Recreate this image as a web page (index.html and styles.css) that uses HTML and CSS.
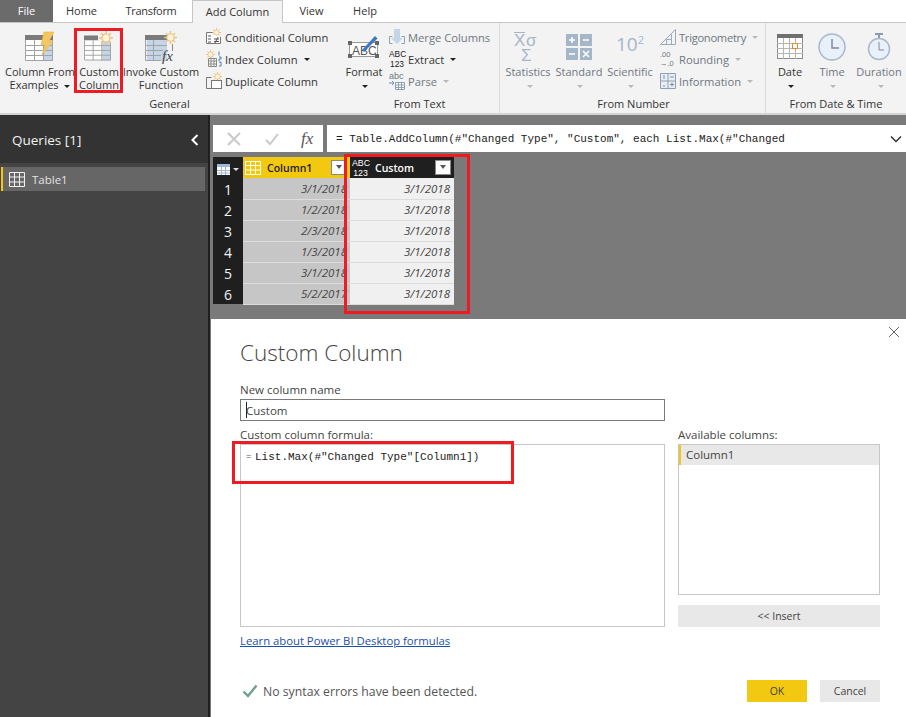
FILE: index.html
```html
<!doctype html>
<html lang="en">
<head>
    <meta charset="UTF-8">
    <title>Custom Column</title>
    <link rel="stylesheet" href="styles.css">
</head>
<body>

<svg class="sprite" width="0" height="0">
    <symbol id="sun" viewBox="0 0 14 14">
        <g stroke="#eec07c" stroke-width="1.4">
            <path d="M7 0v14M0 7h14M2 2l10 10M12 2L2 12"/>
        </g>
        <circle cx="7" cy="7" r="4" fill="#fdf3df" stroke="#eec07c" stroke-width="1.2"/>
    </symbol>
    <symbol id="table" viewBox="0 0 28 26">
        <rect x="0" y="0" width="28" height="26" fill="#fff"/>
        <rect x="19" y="5" width="9" height="21" fill="#c4d5e8"/>
        <rect x="0" y="0" width="28" height="5" fill="#7b7b7b"/>
        <path d="M.5 5v20.5h27V5M0 10.500h28M0 15.500h28M0 20.500h28M9.500 5v21M18.500 5v21" fill="none" stroke="#a2a2a2"/>
    </symbol>
</svg>

<div class="app">
    <ul class="tabs">
        <li class="tab file">File</li>
        <li class="tab home">Home</li>
        <li class="tab transform tight">Transform</li>
        <li class="tab active">Add Column</li>
        <li class="tab view">View</li>
        <li class="tab help">Help</li>
    </ul>

    <div class="ribbon">
        <section class="group group-general">
            <div class="group-items">
                <div class="big-btn w-74">
                    <svg class="big-icon" width="30" height="30" viewBox="0 0 30 30">
                        <use href="#table" x="0" y="3" width="28" height="26"/>
                        <path d="M19 0h10l-5 9h4L17 23l3-10h-4z" fill="#f3c65f" stroke="#e9b546" stroke-width=".6"/>
                    </svg>
                    <span class="big-label">Column From<br>Examples <i class="caret"></i></span>
                </div>
                <div class="big-btn w-44">
                    <svg class="big-icon" width="30" height="30" viewBox="0 0 30 30">
                        <use href="#table" x="0" y="3" width="27" height="26"/>
                        <rect x="14" y="0" width="14" height="10" fill="#f3f3f3"/>
                        <use href="#sun" x="15" y="-1" width="14" height="14"/>
                    </svg>
                    <span class="big-label">Custom<br>Column</span>
                </div>
                <div class="big-btn w-80">
                    <svg class="big-icon" width="32" height="30" viewBox="0 0 32 30">
                        <rect x="2" y="3" width="20" height="26" fill="#c4d5e8"/>
                        <rect x="0" y="3" width="27" height="5" fill="#7b7b7b"/>
                        <path d="M.5 8v20.500H16M.5 8v20M8.500 8v21M0 13.500h22M0 18.500h18M0 23.500h16" fill="none" stroke="#a2a2a2"/>
                        <use href="#sun" x="19" y="-1" width="13" height="13"/>
                        <text class="fx-mini" x="17" y="29">fx</text>
                        <path d="M27.500 12v7" stroke="#888"/>
                    </svg>
                    <span class="big-label">Invoke Custom<br>Function</span>
                </div>
                <div class="small-col small-general">
                    <div class="small-btn">
                        <svg width="16" height="18" viewBox="0 0 16 18">
                            <use href="#sun" x="6" y="0" width="9" height="9"/>
                            <path d="M.5 4.500h6M.5 4.500v11h14V9" fill="#fff" stroke="#777"/>
                            <path d="M2 8h3M2 11h3M2 14h3M8 11h5M8 13.500h5M9 15l3-6" fill="none" stroke="#555"/>
                        </svg>
                        <span>Conditional Column</span>
                    </div>
                    <div class="small-btn">
                        <svg width="16" height="18" viewBox="0 0 16 18">
                            <use href="#sun" x="0" y="0" width="9" height="9"/>
                            <path d="M2.500 8.500h8v8h-8zM2.500 11h8M2.500 14h8M5 8.500v8M8 8.500v8" fill="#fff" stroke="#888"/>
                            <path d="M13 1.500v4M13 7h2v2h-2v2M13 12h2v4h-2" fill="none" stroke="#4a7fc0"/>
                        </svg>
                        <span>Index Column</span><i class="caret"></i>
                    </div>
                    <div class="small-btn">
                        <svg width="16" height="18" viewBox="0 0 16 18">
                            <use href="#sun" x="7" y="0" width="9" height="9"/>
                            <path d="M5.500 5.500H.5v11h5" fill="none" stroke="#777"/>
                            <rect x="5.500" y="8.500" width="10" height="8" fill="#fff" stroke="#777"/>
                        </svg>
                        <span>Duplicate Column</span>
                    </div>
                </div>
            </div>
            <div class="group-title">General</div>
        </section>

        <section class="group group-text">
            <div class="group-items">
                <div class="big-btn w-48">
                    <svg class="big-icon" width="32" height="30" viewBox="0 0 32 30">
                        <rect x="1.500" y="10.500" width="28" height="14" fill="#fff" stroke="#999"/>
                        <path d="M0 9h4v4H0zM27 9h4v4h-4zM0 22h4v4H0zM27 22h4v4h-4z" fill="#666"/>
                        <text class="abc-mini" x="4" y="23">ABC</text>
                        <path d="M14 18L27 4l2.500 2.500L16 20z" fill="#3f78bd"/>
                    </svg>
                    <span class="big-label">Format<br><i class="caret"></i></span>
                </div>
                <div class="small-col small-text">
                    <div class="small-btn off">
                        <svg width="16" height="18" viewBox="0 0 16 18">
                            <path d="M5 1h6v9l3 0-6 6-6-6h3z" fill="#c4d5e8"/>
                            <path d="M3.500 8.500h-3v7h3M12.500 8.500h3v7h-3" fill="none" stroke="#8fa0b2"/>
                        </svg>
                        <span>Merge Columns</span>
                    </div>
                    <div class="small-btn">
                        <span class="abc-stack"><b>ABC</b><b>123</b></span>
                        <span>Extract</span><i class="caret"></i>
                    </div>
                    <div class="small-btn off">
                        <svg width="16" height="18" viewBox="0 0 16 18">
                            <text class="abc-tiny" x="0" y="7">abc</text>
                            <path d="M0 11h5M3 9l2 2-2 2" fill="none" stroke="#6f90b8"/>
                            <path d="M6.500 10.500h9v7h-9zM6.500 13h9M6.500 15.500h9M9.500 10.500v7M12.500 10.500v7" fill="#fff" stroke="#8fa0b2"/>
                        </svg>
                        <span>Parse</span><i class="caret"></i>
                    </div>
                </div>
            </div>
            <div class="group-title">From Text</div>
        </section>

        <section class="group group-number">
            <div class="group-items">
                <div class="big-btn w-52 off">
                    <svg class="big-icon" width="28" height="30" viewBox="0 0 28 30">
                        <path d="M0 .500h11" stroke="#a6b6c9"/>
                        <text class="stat-mini" x="0" y="14">X</text>
                        <text class="stat-mini" x="12" y="14">σ</text>
                        <text class="stat-mini" x="7" y="29">Σ</text>
                    </svg>
                    <span class="big-label">Statistics<br><i class="caret"></i></span>
                </div>
                <div class="big-btn w-50 off">
                    <svg class="big-icon" width="26" height="26" viewBox="0 0 26 26">
                        <path d="M0 0h12v12H0zM14 0h12v12H14zM0 14h12v12H0zM14 14h12v12H14z" fill="#a6b6c9"/>
                        <path d="M3 6h6M6 3v6M17 6h6M3 20h6M17 17l6 6M23 17l-6 6" stroke="#fff" stroke-width="1.500"/>
                        <path d="M6 17v.1M6 23v.1" stroke="#fff" stroke-width="2"/>
                    </svg>
                    <span class="big-label">Standard<br><i class="caret"></i></span>
                </div>
                <div class="big-btn w-52 off">
                    <span class="big-icon power">10<sup>2</sup></span>
                    <span class="big-label">Scientific<br><i class="caret"></i></span>
                </div>
                <div class="small-col small-number">
                    <div class="small-btn off">
                        <svg width="16" height="18" viewBox="0 0 16 18">
                            <path d="M.5 16.500L15.500 1.500v15zM6.500 16.500v-5h5v5M11.500 11.500v-5" fill="none" stroke="#9aa9bb"/>
                        </svg>
                        <span class="tight">Trigonometry</span><i class="caret"></i>
                    </div>
                    <div class="small-btn off">
                        <span class="round-mini">.00<br>→.0</span>
                        <span>Rounding</span><i class="caret"></i>
                    </div>
                    <div class="small-btn off">
                        <svg width="16" height="16" viewBox="0 0 16 16">
                            <path d="M.5.500h15v15H.5zM8 .5v15M.5 8h15" fill="#e8eef6" stroke="#8fa0b2"/>
                            <path d="M10 4h4M10 11.500h4M12 9.500v4" stroke="#7d8fa3"/>
                            <path d="M4 2v4M3 13h2" stroke="#7d8fa3"/>
                        </svg>
                        <span>Information</span><i class="caret"></i>
                    </div>
                </div>
            </div>
            <div class="group-title">From Number</div>
        </section>

        <section class="group group-date">
            <div class="group-items">
                <div class="big-btn w-48">
                    <svg class="big-icon" width="26" height="26" viewBox="0 0 26 26">
                        <rect x=".5" y=".5" width="25" height="24" fill="#fff" stroke="#8a8a8a"/>
                        <rect x="0" y="0" width="26" height="4" fill="#6f6f6f"/>
                        <path d="M0 9.500h26M0 14.500h26M0 19.500h26M6.500 4v21M12.500 4v21M18.500 4v21" stroke="#b5b5b5"/>
                        <rect x="15.500" y="9.500" width="5" height="5" fill="#fff" stroke="#e8892c"/>
                    </svg>
                    <span class="big-label">Date<br><i class="caret"></i></span>
                </div>
                <div class="big-btn w-36 off">
                    <svg class="big-icon" width="28" height="28" viewBox="0 0 28 28">
                        <circle cx="14" cy="14" r="13" fill="#e9f0fa" stroke="#a9b8cc" stroke-width="1.500"/>
                        <path d="M14 6v9h7" fill="none" stroke="#7b8ca0" stroke-width="1.500"/>
                    </svg>
                    <span class="big-label">Time<br><i class="caret"></i></span>
                </div>
                <div class="big-btn w-58 off">
                    <svg class="big-icon" width="24" height="28" viewBox="0 0 24 28">
                        <path d="M8 1h8" stroke="#8a9bb0" stroke-width="2"/>
                        <path d="M12 1v4" stroke="#8a9bb0" stroke-width="2"/>
                        <circle cx="12" cy="16" r="10.500" fill="#e9f0fa" stroke="#a9b8cc" stroke-width="1.500"/>
                        <path d="M12 9v8h5" fill="none" stroke="#7b8ca0"/>
                    </svg>
                    <span class="big-label">Duration<br><i class="caret"></i></span>
                </div>
            </div>
            <div class="group-title">From Date &amp; Time</div>
        </section>
    </div>

    <div class="workspace">
        <aside class="queries">
            <div class="queries-head">
                <span>Queries [1]</span>
                <svg width="8" height="12" viewBox="0 0 8 12"><path d="M6.500 1L1.500 6l5 5" fill="none" stroke="#fff" stroke-width="2"/></svg>
            </div>
            <div class="query-row">
                <svg width="16" height="15" viewBox="0 0 16 15">
                    <path d="M.5.500h15v14H.5zM.5 5h15M.5 10h15M5.500.5v14M10.500.5v14" fill="none" stroke="#f2f2f2"/>
                </svg>
                <span>Table1</span>
            </div>
        </aside>

        <main class="main">
            <div class="preview">
                <div class="formula-bar">
                    <div class="fx-box">
                        <svg width="16" height="16" viewBox="0 0 16 16"><path d="M2 2l12 12M14 2L2 14" stroke="#c9c9c9" stroke-width="2"/></svg>
                        <svg width="16" height="16" viewBox="0 0 16 16"><path d="M2 9l4 4 8-10" fill="none" stroke="#c9c9c9" stroke-width="2"/></svg>
                        <span class="fx-text">fx</span>
                    </div>
                    <div class="formula-input">
                        <span>= Table.AddColumn(#"Changed Type", "Custom", each List.Max(#"Changed</span>
                        <svg width="12" height="8" viewBox="0 0 12 8"><path d="M1 1.500l5 5 5-5" fill="none" stroke="#333" stroke-width="1.500"/></svg>
                    </div>
                </div>

                <table class="grid">
                    <thead>
                    <tr>
                        <th class="corner">
                            <svg width="13" height="11" viewBox="0 0 13 11">
                                <rect width="13" height="3" fill="#9db8dc"/>
                                <path d="M0 3h13v8H0z" fill="#fff"/>
                                <path d="M4.500 3v8M8.500 3v8M0 6.500h13M0 9h13" stroke="#9db8dc"/>
                            </svg><i class="caret caret-light"></i>
                        </th>
                        <th class="head-yellow">
                            <div class="head-cell">
                                <svg width="16" height="14" viewBox="0 0 16 14">
                                    <path d="M.5.500h15v13H.5zM.5 4.500h15M.5 9h15M5.500.5v13M10.500.5v13" fill="#f2c811" stroke="#fff"/>
                                </svg>
                                <span>Column1</span>
                                <b class="drop"></b>
                            </div>
                        </th>
                        <th class="head-dark">
                            <div class="head-cell">
                                <span class="abc-stack abc-white"><b>ABC</b><b>123</b></span>
                                <span>Custom</span>
                                <b class="drop"></b>
                            </div>
                        </th>
                    </tr>
                    </thead>
                    <tbody>
                    <tr><th>1</th><td class="col-a">3/1/2018</td><td class="col-b">3/1/2018</td></tr>
                    <tr><th>2</th><td class="col-a">1/2/2018</td><td class="col-b">3/1/2018</td></tr>
                    <tr><th>3</th><td class="col-a">2/3/2018</td><td class="col-b">3/1/2018</td></tr>
                    <tr><th>4</th><td class="col-a">1/3/2018</td><td class="col-b">3/1/2018</td></tr>
                    <tr><th>5</th><td class="col-a">3/1/2018</td><td class="col-b">3/1/2018</td></tr>
                    <tr><th>6</th><td class="col-a">5/2/2017</td><td class="col-b">3/1/2018</td></tr>
                    </tbody>
                </table>
            </div>

            <div class="dialog">
                <svg class="dialog-close" width="12" height="12" viewBox="0 0 12 12"><path d="M1 1l10 10M11 1L1 11" stroke="#666" stroke-width="1"/></svg>
                <h1>Custom Column</h1>
                <label class="field-label">New column name</label>
                <div class="name-input"><i class="text-cursor"></i>Custom</div>
                <div class="editor-row">
                    <div class="editor-col">
                        <label class="field-label">Custom column formula:</label>
                        <div class="formula-box"><span class="eq">=</span><span>List.Max(#"Changed Type"[Column1])</span></div>
                    </div>
                    <div class="side-col">
                        <label class="field-label">Available columns:</label>
                        <ul class="col-list">
                            <li>Column1</li>
                        </ul>
                        <div class="insert-btn">&lt;&lt; Insert</div>
                    </div>
                </div>
                <a class="learn-link" href="#">Learn about Power BI Desktop formulas</a>
                <div class="dialog-foot">
                    <div class="status">
                        <svg width="16" height="14" viewBox="0 0 16 14"><path d="M1.500 7.500l4.500 4.500L14.500 1.500" fill="none" stroke="#6f9f90" stroke-width="2.400"/></svg>
                        <span>No syntax errors have been detected.</span>
                    </div>
                    <div class="foot-btn ok">OK</div>
                    <div class="foot-btn">Cancel</div>
                </div>
            </div>
        </main>
    </div>

    <!-- red callouts sit over the screenshot -->
    <div class="mark mark-ribbon"></div>
    <div class="mark mark-column"></div>
    <div class="mark mark-formula"></div>
</div>

</body>
</html>
```
FILE: styles.css
```css
* {
    padding: 0;
    margin: 0;
    list-style: none;
    box-sizing: border-box;
}

body {
    font-family: "Open Sans", "Noto Sans", sans-serif;
    font-size: 11px;
    color: #333;
    overflow: hidden;
}

.sprite {
    position: absolute;
}

.tight {
    letter-spacing: -.3px;
}

.app {
    position: relative;
    width: 906px;
    height: 717px;
    display: flex;
    flex-direction: column;
    overflow: hidden;
}

/* tabs */
.tabs {
    display: flex;
    height: 23px;
    flex-shrink: 0;
    background-color: #fff;
    border-bottom: 1px solid #c6c6c6;
}

.tab {
    line-height: 22px;
    text-align: center;
}

.tab.file {
    width: 53px;
    background-color: #6b6b6b;
    color: #fff;
}

.tab.home {
    width: 57px;
}

.tab.transform {
    width: 82px;
}

.tab.active {
    width: 91px;
    height: 23px;
    background-color: #f3f3f3;
    border: 1px solid #c6c6c6;
    border-bottom: 0;
}

.tab.view {
    width: 57px;
}

.tab.help {
    width: 50px;
}

/* ribbon */
.ribbon {
    display: flex;
    height: 92px;
    flex-shrink: 0;
    background-color: #f3f3f3;
    border-bottom: 2px solid #d4d4d4;
}

.group {
    display: flex;
    flex-direction: column;
    padding-top: 2px;
}

.group-items {
    display: flex;
    height: 73px;
}

.group-title {
    text-align: center;
    line-height: 18px;
}

.group-general {
    width: 336px;
    padding-left: 3px;
}

.group-text {
    width: 164px;
    padding-left: 4px;
    border-right: 1px solid #dcdcdc;
}

.group-number {
    width: 266px;
    padding-left: 2px;
    border-right: 1px solid #dcdcdc;
}

.group-date {
    width: 140px;
}

.big-btn {
    display: flex;
    flex-direction: column;
    align-items: center;
    flex-shrink: 0;
}

.big-icon {
    height: 40px;
    padding-top: 4px;
    flex-shrink: 0;
}

.big-label {
    text-align: center;
    line-height: 13px;
    white-space: nowrap;
}

.w-36 { width: 36px; }
.w-44 { width: 44px; }
.w-48 { width: 48px; }
.w-50 { width: 50px; }
.w-52 { width: 52px; }
.w-58 { width: 58px; }
.w-74 { width: 74px; }
.w-80 { width: 80px; }

.off {
    color: #6f7780;
}

.small-col {
    display: flex;
    flex-direction: column;
    gap: 2px;
    padding-top: 2px;
    margin-left: 5px;
}

.small-btn {
    display: flex;
    align-items: center;
    height: 20px;
    gap: 3px;
    font-size: 11.2px;
    white-space: nowrap;
}

.small-btn svg,
.small-btn .abc-stack,
.small-btn .round-mini {
    width: 16px;
    flex-shrink: 0;
}

.small-text {
    margin-left: 1px;
}

.small-number {
    margin-left: 4px;
}

.caret {
    display: inline-block;
    width: 0;
    height: 0;
    margin-left: 3px;
    vertical-align: middle;
    border-left: 3px solid transparent;
    border-right: 3px solid transparent;
    border-top: 3px solid #222;
}

.off .caret {
    border-top-color: #b9b9b9;
}

.caret-light {
    border-top-color: #ddd;
}

.abc-stack {
    display: inline-flex;
    flex-direction: column;
    font: 8.4px/10px "Liberation Sans", sans-serif;
    color: #222;
    text-align: center;
}

.abc-stack b {
    font-weight: 400;
}

.abc-white {
    color: #fff;
    width: 17px;
    flex-shrink: 0;
    font-size: 8.8px;
}

.abc-mini {
    font: 12px "Liberation Sans", sans-serif;
    fill: #555;
}

.abc-tiny {
    font: 9px "Liberation Sans", sans-serif;
    fill: #6f7780;
}

.fx-mini {
    font: italic 15px "Liberation Serif", serif;
    fill: #444;
}

.stat-mini {
    font: 17px "Liberation Sans", sans-serif;
    fill: #a6b6c9;
}

.power {
    font-size: 19px;
    line-height: 30px;
    color: #a6b6c9;
}

.power sup {
    font-size: 11px;
    line-height: 0;
}

.round-mini {
    font: 7.500px/9px "Liberation Sans", sans-serif;
    color: #6f7780;
}

/* workspace */
.workspace {
    flex: 1;
    display: flex;
    min-height: 0;
}

.queries {
    width: 210px;
    flex-shrink: 0;
    background-color: #444;
    border-right: 2px solid #1f1f1f;
    padding-bottom: 0;
}

.queries-head {
    display: flex;
    justify-content: space-between;
    align-items: center;
    height: 48px;
    padding: 2px 9px 0 12px;
    background-color: #333;
    color: #f2f2f2;
    font-size: 13.500px;
    margin-bottom: 4px;
}

.query-row {
    display: flex;
    align-items: center;
    gap: 7px;
    height: 24px;
    width: 204px;
    margin-left: 1px;
    padding-left: 6px;
    background-color: #666;
    border-left: 2px solid #f2c811;
    color: #e4e4e4;
    font-size: 11.500px;
}

.main {
    flex: 1;
    display: flex;
    flex-direction: column;
    min-width: 0;
    background-color: #7a7a7a;
}

.preview {
    height: 204px;
    flex-shrink: 0;
    padding: 10px 0 0 3px;
}

.formula-bar {
    display: flex;
    gap: 4px;
    height: 27px;
}

.fx-box {
    display: flex;
    align-items: center;
    width: 110px;
    padding-left: 13px;
    gap: 22px;
    background-color: #fff;
}

.fx-text {
    font: italic 17px "Liberation Serif", serif;
    color: #555;
    margin-left: -1px;
}

.formula-input {
    flex: 1;
    display: flex;
    align-items: center;
    justify-content: space-between;
    padding: 0 4px 0 9px;
    background-color: #fff;
    font: 11px "Liberation Mono", monospace;
    color: #222;
    white-space: nowrap;
}

.grid {
    margin-top: 5px;
    border-collapse: collapse;
    table-layout: fixed;
    width: 241px;
}

.grid th,
.grid td {
    padding: 0;
    height: 21px;
}

.grid .corner {
    width: 30px;
    background-color: #1f1f1f;
    text-align: center;
}

.grid .corner svg {
    vertical-align: middle;
}

.grid tbody th {
    padding-top: 2px;
    background-color: #1f1f1f;
    color: #f2f2f2;
    font-size: 14px;
    font-weight: 400;
    line-height: 17px;
}

.head-yellow {
    width: 107px;
    background-color: #f2c811;
    color: #222;
}

.head-dark {
    width: 104px;
    background-color: #1f1f1f;
    color: #fff;
}

.head-cell {
    display: flex;
    align-items: center;
    height: 21px;
    padding-left: 2px;
    gap: 6px;
    font-weight: 600;
    font-size: 10.500px;
}

.drop {
    position: relative;
    margin-left: auto;
    margin-right: 3px;
    width: 16px;
    height: 15px;
    background-color: #fff;
    border: 1px solid #888;
}

.drop::after {
    content: "";
    position: absolute;
    left: 4px;
    top: 4px;
    border-left: 3px solid transparent;
    border-right: 3px solid transparent;
    border-top: 4px solid #555;
}

.col-a,
.col-b {
    text-align: right;
    font-style: italic;
    font-size: 11.500px;
    color: #444;
    border-bottom: 1px solid #dcdcdc;
    overflow: hidden;
    white-space: nowrap;
}

.col-a {
    background-color: #c6c6c6;
    padding-right: 3px !important;
}

.col-b {
    background-color: #f0f0f0;
    padding-right: 4px !important;
}

/* dialog */
.dialog {
    position: relative;
    flex: 1;
    display: flex;
    flex-direction: column;
    margin-left: 1px;
    padding: 0 26px 0 29px;
    background-color: #fff;
    font-size: 11.500px;
}

.dialog-close {
    position: absolute;
    top: 7px;
    right: 6px;
}

.dialog h1 {
    font-size: 22.500px;
    font-weight: 300;
    line-height: 30px;
    margin-top: 19px;
    color: #444;
}

.field-label {
    display: block;
    color: #444;
    line-height: 14px;
}

.dialog h1 + .field-label {
    margin-top: 15px;
}

.name-input {
    display: flex;
    align-items: center;
    width: 425px;
    height: 22px;
    margin-top: 2px;
    padding-left: 5px;
    border: 1px solid #7a7a7a;
    color: #444;
}

.text-cursor {
    width: 1px;
    height: 16px;
    background-color: #222;
    margin-right: -1px;
}

.editor-row {
    display: flex;
    gap: 13px;
    margin-top: 7px;
}

.editor-col {
    width: 425px;
}

.side-col {
    width: 202px;
}

.formula-box {
    display: flex;
    height: 183px;
    margin-top: 2px;
    padding: 4px 0 0 5px;
    border: 1px solid #c6c6c6;
    font: 11px/16px "Liberation Mono", monospace;
    color: #222;
}

.eq {
    width: 9px;
    font-size: 9px;
    color: #555;
}

.col-list {
    height: 151px;
    margin-top: 2px;
    border: 1px solid #c6c6c6;
}

.col-list li {
    height: 20px;
    line-height: 20px;
    padding-left: 5px;
    background-color: #e8e8e8;
    border-left: 2px solid #f2c811;
    color: #444;
}

.insert-btn {
    height: 22px;
    margin-top: 10px;
    line-height: 22px;
    text-align: center;
    background-color: #e8e8e8;
    font-size: 10.500px;
    color: #444;
}

.learn-link {
    align-self: flex-start;
    margin-top: 6px;
    line-height: 15px;
    font-size: 11.300px;
    color: #1b4fae;
}

.dialog-foot {
    display: flex;
    align-items: center;
    gap: 13px;
    margin-top: 32px;
}

.status {
    display: flex;
    align-items: center;
    gap: 5px;
    margin-left: 2px;
    margin-right: auto;
    font-size: 12.250px;
    color: #555;
}

.foot-btn {
    width: 60px;
    height: 22px;
    line-height: 22px;
    text-align: center;
    background-color: #e8e8e8;
    font-size: 10.500px;
    color: #444;
}

.foot-btn.ok {
    background-color: #f2c811;
}

.mark {
    position: absolute;
    border: 3px solid #ed1c24;
    pointer-events: none;
}

.mark-ribbon {
    left: 74px;
    top: 28px;
    width: 49px;
    height: 65px;
}

.mark-column {
    left: 344px;
    top: 154px;
    width: 126px;
    height: 160px;
}

.mark-formula {
    left: 232px;
    top: 441px;
    width: 282px;
    height: 43px;
}
```
